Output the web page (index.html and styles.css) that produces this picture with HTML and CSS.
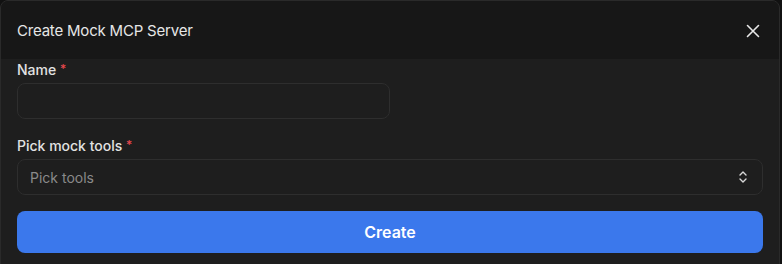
FILE: index.html
```html
<!DOCTYPE html>
<html>
<head>
<meta charset="utf-8">
<link rel="stylesheet" href="styles.css">
</head>
<body>
<div class="dialog">
  <div class="header">
    <div class="title">Create Mock MCP Server</div>
    <button class="close" aria-label="Close">
      <svg width="14" height="14" viewBox="0 0 14 14"><path d="M1.5 1.5 L12.5 12.5 M12.5 1.5 L1.5 12.5" stroke="#e8e8e8" stroke-width="1.6" stroke-linecap="round"/></svg>
    </button>
  </div>
  <div class="body">
    <div class="field">
      <label class="label">Name <span class="req">*</span></label>
      <div class="input short"></div>
    </div>
    <div class="field">
      <label class="label">Pick mock tools <span class="req">*</span></label>
      <div class="input select">
        <span class="placeholder">Pick tools</span>
        <svg width="10" height="14" viewBox="0 0 10 14"><path d="M2 5 L5 2 L8 5 M2 9 L5 12 L8 9" fill="none" stroke="#d8d8d8" stroke-width="1.4" stroke-linecap="round" stroke-linejoin="round"/></svg>
      </div>
    </div>
    <button class="create">Create</button>
  </div>
</div>
</body>
</html>
```
FILE: styles.css
```css
* { box-sizing: border-box; }
html, body { margin: 0; padding: 0; }
body {
  background: #111111;
  font-family: Inter, "Noto Sans", sans-serif;
  width: 782px;
  height: 264px;
  overflow: hidden;
}
.dialog {
  width: 780px;
  height: 270px;
  border: 1px solid #2a2a2a;
  border-radius: 8px 8px 0 0;
  background: #1e1e1e;
  overflow: hidden;
}
.header {
  height: 58px;
  background: #171717;
  display: flex;
  align-items: center;
  justify-content: space-between;
  padding: 0 16px 0 16px;
}
.title {
  color: #e6e6e6;
  font-size: 15px;
  letter-spacing: -0.2px;
  font-weight: 400;
  padding-top: 1px;
}
.close {
  background: none;
  border: 0;
  padding: 0;
  width: 14px;
  height: 14px;
  display: flex;
  margin-right: 3px;
  margin-top: 1px;
}
.body {
  padding: 1px 16px 0 16px;
  display: flex;
  flex-direction: column;
}
.field {
  display: flex;
  flex-direction: column;
  gap: 3px;
  margin-bottom: 17px;
}
.field + .field { margin-bottom: 16px; }
.label {
  display: block;
  height: 20px;
  color: #e2e2e2;
  font-size: 14px;
  font-weight: 500;
  line-height: 20px;
}
.req { color: #e5484d; font-size: 12px; line-height: 0; vertical-align: 2px; }
.input {
  height: 36px;
  border: 1px solid #2e2e2e;
  border-radius: 8px;
  background: #1e1e1e;
}
.short { width: 373px; }
.select {
  display: flex;
  align-items: center;
  justify-content: space-between;
  padding: 0 14px 0 12px;
}
.placeholder {
  color: #8a8a8a;
  font-size: 14px;
}
.create {
  height: 42px;
  border: 0;
  border-radius: 8px;
  background: #3b78ec;
  color: #ffffff;
  font-family: Inter, "Noto Sans", sans-serif;
  font-size: 16px;
  font-weight: 600;
}
```
